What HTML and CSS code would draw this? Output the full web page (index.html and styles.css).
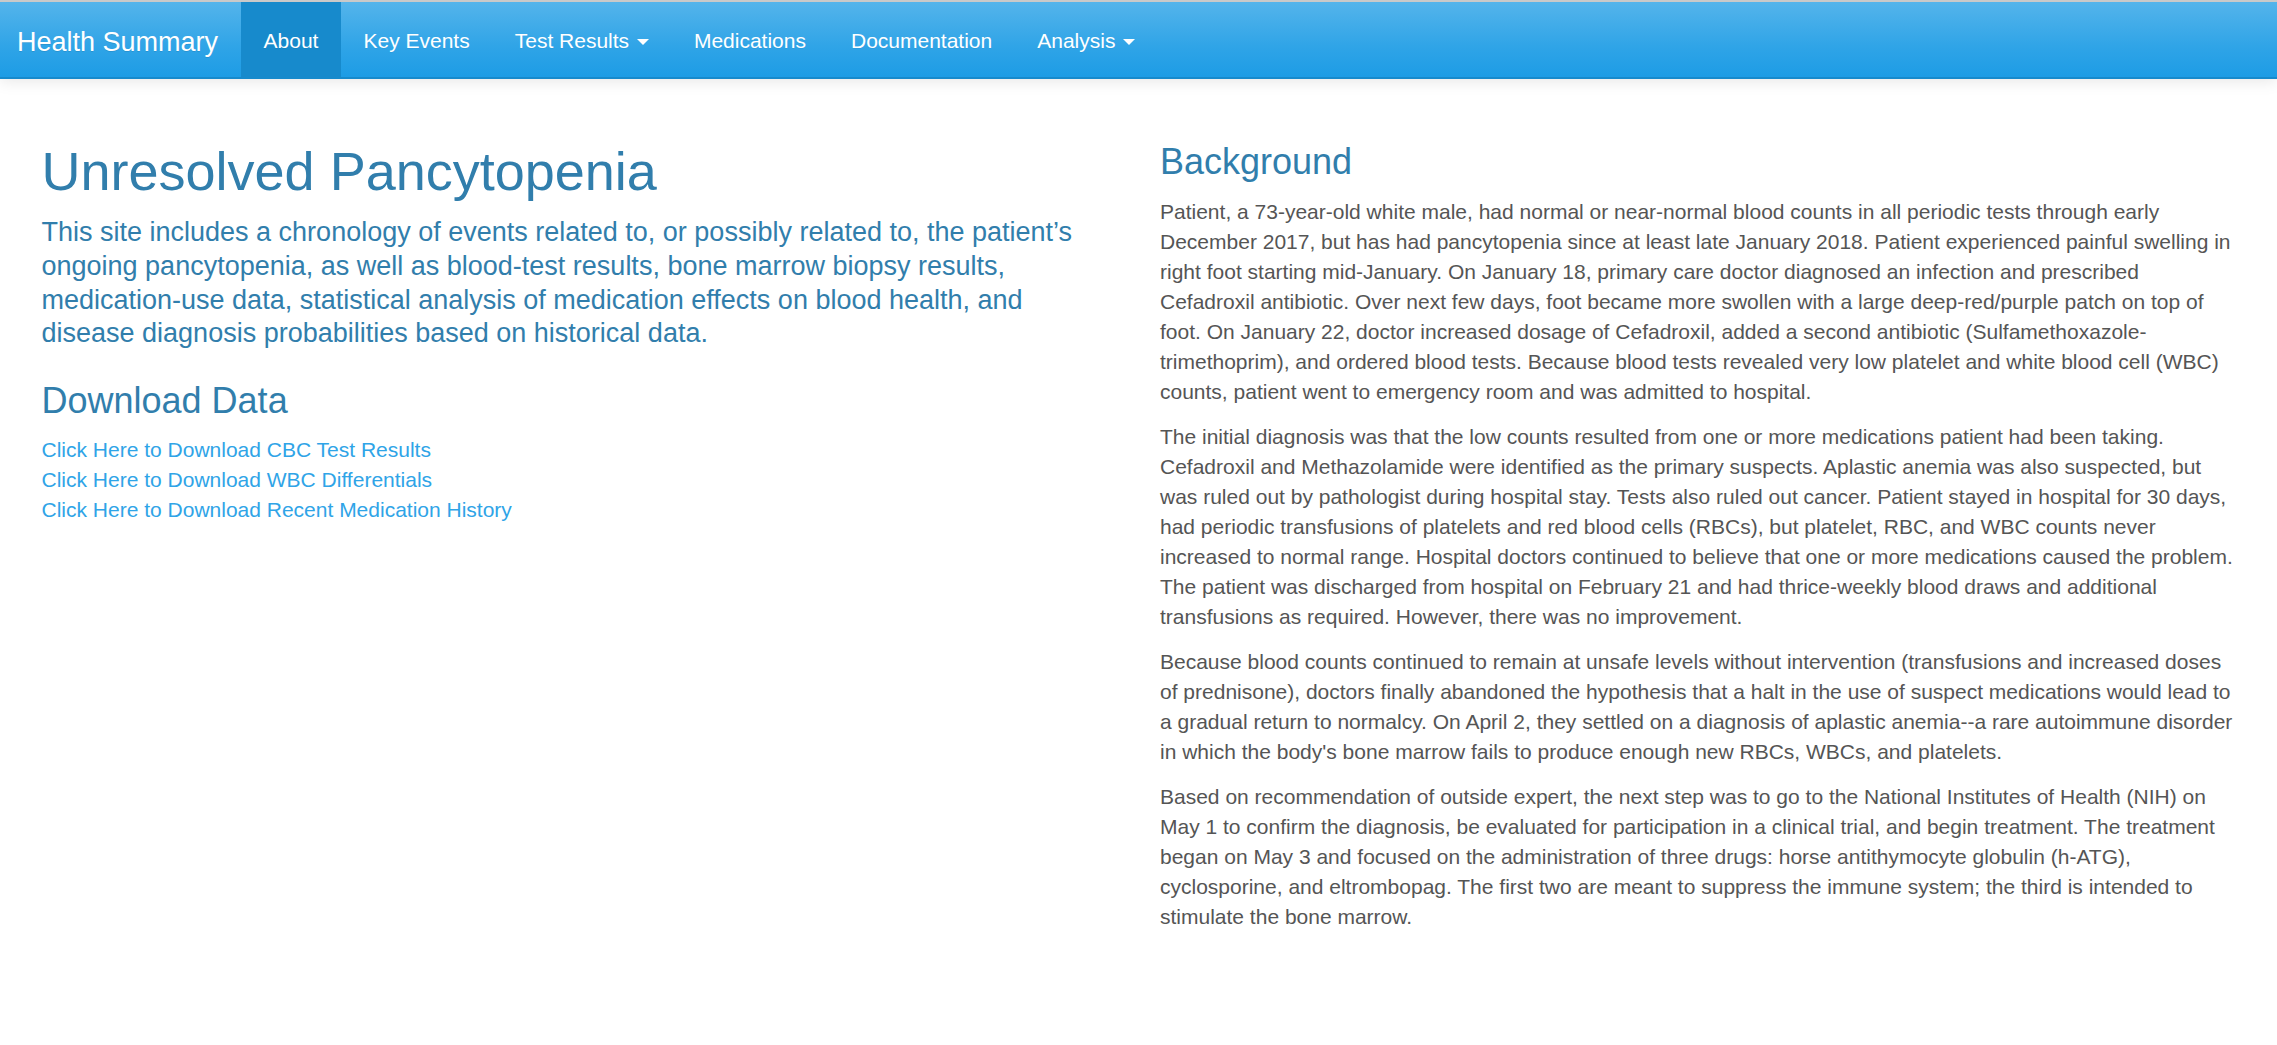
FILE: index.html
```html
<!DOCTYPE html>
<html lang="en">
<head>
<meta charset="utf-8">
<title>Health Summary</title>
<link rel="stylesheet" href="styles.css">
</head>
<body>
<nav class="navbar">
  <a class="brand" href="#">Health Summary</a>
  <ul class="nav">
    <li class="active"><a href="#">About</a></li>
    <li><a href="#">Key Events</a></li>
    <li><a href="#">Test Results <span class="caret"></span></a></li>
    <li><a href="#">Medications</a></li>
    <li><a href="#">Documentation</a></li>
    <li><a href="#">Analysis <span class="caret"></span></a></li>
  </ul>
</nav>
<main class="main">
  <section class="col col-left">
    <h1 class="title">Unresolved Pancytopenia</h1>
    <p class="lead">This site includes a chronology of events related to, or possibly related to, the patient’s ongoing pancytopenia, as well as blood-test results, bone marrow biopsy results, medication-use data, statistical analysis of medication effects on blood health, and disease diagnosis probabilities based on historical data.</p>
    <h3 class="subtitle">Download Data</h3>
    <div class="downloads">
      <a href="#">Click Here to Download CBC Test Results</a>
      <a href="#">Click Here to Download WBC Differentials</a>
      <a href="#">Click Here to Download Recent Medication History</a>
    </div>
  </section>
  <section class="col col-right">
    <h3 class="subtitle">Background</h3>
    <p class="body">Patient, a 73-year-old white male, had normal or near-normal blood counts in all periodic tests through early December 2017, but has had pancytopenia since at least late January 2018. Patient experienced painful swelling in right foot starting mid-January. On January 18, primary care doctor diagnosed an infection and prescribed Cefadroxil antibiotic. Over next few days, foot became more swollen with a large deep-red/purple patch on top of foot. On January 22, doctor increased dosage of Cefadroxil, added a second antibiotic (Sulfamethoxazole-trimethoprim), and ordered blood tests. Because blood tests revealed very low platelet and white blood cell (WBC) counts, patient went to emergency room and was admitted to hospital.</p>
    <p class="body">The initial diagnosis was that the low counts resulted from one or more medications patient had been taking. Cefadroxil and Methazolamide were identified as the primary suspects. Aplastic anemia was also suspected, but was ruled out by pathologist during hospital stay. Tests also ruled out cancer. Patient stayed in hospital for 30 days, had periodic transfusions of platelets and red blood cells (RBCs), but platelet, RBC, and WBC counts never increased to normal range. Hospital doctors continued to believe that one or more medications caused the problem. The patient was discharged from hospital on February 21 and had thrice-weekly blood draws and additional transfusions as required. However, there was no improvement.</p>
    <p class="body">Because blood counts continued to remain at unsafe levels without intervention (transfusions and increased doses of prednisone), doctors finally abandoned the hypothesis that a halt in the use of suspect medications would lead to a gradual return to normalcy. On April 2, they settled on a diagnosis of aplastic anemia--a rare autoimmune disorder in which the body's bone marrow fails to produce enough new RBCs, WBCs, and platelets.</p>
    <p class="body">Based on recommendation of outside expert, the next step was to go to the National Institutes of Health (NIH) on May 1 to confirm the diagnosis, be evaluated for participation in a clinical trial, and begin treatment. The treatment began on May 3 and focused on the administration of three drugs: horse antithymocyte globulin (h-ATG), cyclosporine, and eltrombopag. The first two are meant to suppress the immune system; the third is intended to stimulate the bone marrow.</p>
  </section>
</main>
</body>
</html>
```
FILE: styles.css
```css
html, body {
  margin: 0;
  padding: 0;
}
body {
  font-family: "Liberation Sans", Arial, Helvetica, sans-serif;
  font-size: 21px;
  line-height: 30px;
  color: #555555;
  background: #ffffff;
  border-top: 2px solid #c9c9c9;
}
a {
  text-decoration: none;
}
.navbar {
  display: flex;
  align-items: stretch;
  height: 75px;
  background-image: linear-gradient(#54b4eb, #2fa4e7 60%, #1d9ce5);
  border-bottom: 2px solid #178acc;
  box-shadow: 0 2px 15px rgba(0, 0, 0, 0.1);
  position: relative;
}
.brand {
  display: block;
  color: #ffffff;
  font-size: 27px;
  line-height: 30px;
  padding: 25px 23px 20px 17px;
  text-shadow: 0 1px 0 rgba(0, 0, 0, 0.1);
}
.nav {
  display: flex;
  list-style: none;
  margin: 0;
  padding: 0;
}
.nav li a {
  display: block;
  color: #ffffff;
  font-size: 21px;
  line-height: 30px;
  padding: 24px 22.5px 21px;
  text-shadow: 0 1px 0 rgba(0, 0, 0, 0.05);
}
.nav li.active a {
  background-color: #178acc;
}
.caret {
  display: inline-block;
  width: 0;
  height: 0;
  margin-left: 2px;
  vertical-align: middle;
  border-top: 6px solid #ffffff;
  border-left: 6px solid transparent;
  border-right: 6px solid transparent;
}
.main {
  display: grid;
  grid-template-columns: 1fr 1fr;
  padding-top: 33px;
}
.col {
  padding: 0 21.5px;
}
.col-left {
  padding-left: 41.5px;
}
.col-right {
  padding-right: 41.5px;
}
.title {
  font-size: 54px;
  line-height: 1.1;
  font-weight: 400;
  color: #317eac;
  margin: 30px 0 15px;
}
.lead {
  font-size: 27px;
  line-height: 33.6px;
  color: #317eac;
  margin: 0 0 28px;
}
.subtitle {
  font-size: 36px;
  line-height: 1.1;
  font-weight: 400;
  color: #317eac;
  margin: 30px 0 15px;
}
.downloads a {
  display: block;
  color: #2fa4e7;
  line-height: 30px;
}
.body {
  margin: 0 0 15px;
}
```
